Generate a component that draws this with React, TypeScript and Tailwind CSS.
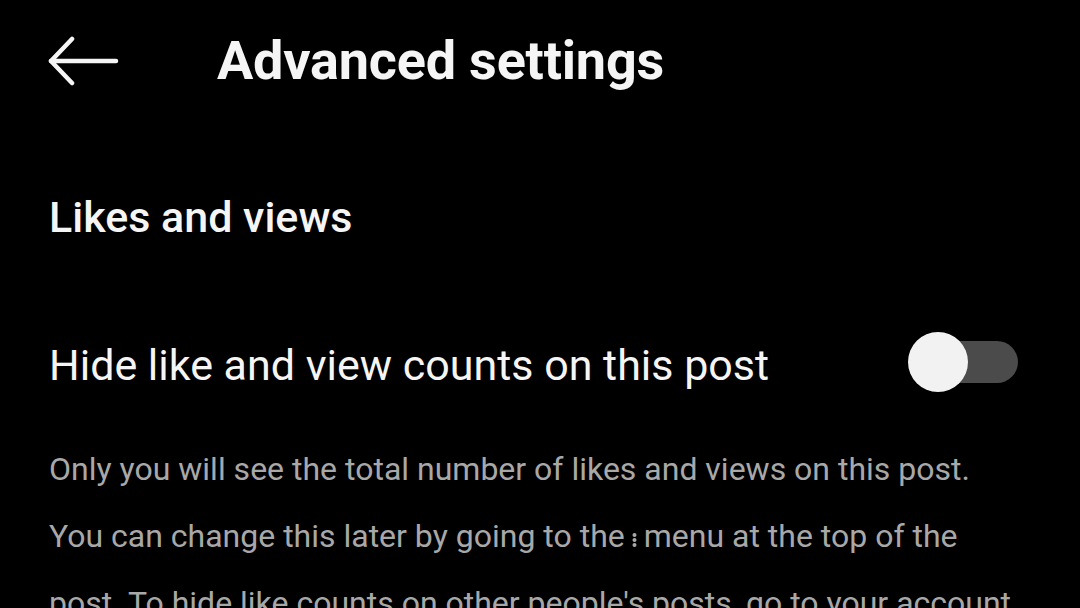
function Kebab() {
  return (
    <svg className="mx-[7px] inline-block align-baseline" width="5" height="14" viewBox="0 0 5 14" fill="#a8a8a8" aria-hidden="true">
      <circle cx="2.5" cy="2" r="2" />
      <circle cx="2.5" cy="7" r="2" />
      <circle cx="2.5" cy="12" r="2" />
    </svg>
  );
}

export default function App() {
  return (
    <div className="h-[608px] w-[1080px] overflow-hidden bg-black text-[#f5f5f5]" style={{ fontFamily: "Roboto, 'Noto Sans', sans-serif" }}>
      {/* Top bar */}
      <div className="flex h-[122px] items-center">
        <button className="ml-[47px] flex h-[50px] w-[72px] items-center" aria-label="Back">
          <svg width="72" height="50" viewBox="0 0 72 50" fill="none" stroke="#f5f5f5" strokeWidth="4.5" strokeLinecap="round" strokeLinejoin="round">
            <path d="M69 25H4" />
            <path d="M25 3L4 25l21 22" />
          </svg>
        </button>
        <h1 className="ml-[98px] text-[54px] font-bold leading-none tracking-[-0.2px]">Advanced settings</h1>
      </div>

      <div className="px-[49px]">
        <h2 className="mt-[74px] text-[43px] font-medium leading-none">Likes and views</h2>

        <div className="mt-[105px] flex items-center justify-between">
          <span className="text-[43px] leading-none">Hide like and view counts on this post</span>
          <div className="relative mr-[13px] h-[42px] w-[110px] translate-y-[-4px]">
            <div className="absolute inset-y-0 right-0 w-[94px] rounded-full bg-[#4b4b4b]" />
            <div className="absolute -top-[9px] left-0 h-[60px] w-[60px] rounded-full bg-[#f2f2f2]" />
          </div>
        </div>

        <p className="mt-[49px] whitespace-nowrap text-[32px] leading-[67px] text-[#a8a8a8]">
          Only you will see the total number of likes and views on this post.
          <br />
          You can change this later by going to the<Kebab />menu at the top of the
          <br />
          post. To hide like counts on other people's posts, go to your account
        </p>
      </div>
    </div>
  );
}
